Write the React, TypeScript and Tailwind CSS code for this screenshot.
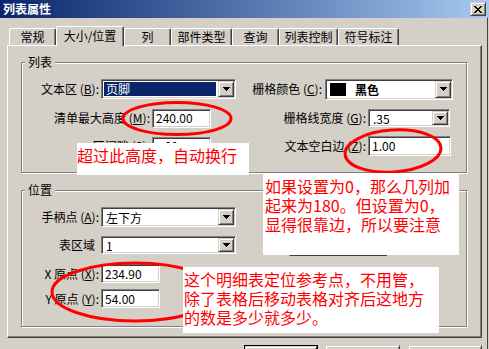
import React from "react";

const sunken =
  "bg-white border border-t-[#808080] border-l-[#808080] border-b-white border-r-white shadow-[inset_1px_1px_0_#404040,inset_-1px_-1px_0_#d4d0c8]";
const raised =
  "bg-[#d4d0c8] border border-t-[#d4d0c8] border-l-[#d4d0c8] border-b-[#404040] border-r-[#404040] shadow-[inset_1px_1px_0_#ffffff,inset_-1px_-1px_0_#808080]";

function Tri() {
  return (
    <svg width="7" height="4" viewBox="0 0 7 4" shapeRendering="crispEdges">
      <path d="M0 0H7V1H6V2H5V3H4V4H3V3H2V2H1V1H0Z" fill="#000" />
    </svg>
  );
}

function DropBtn() {
  return (
    <div className={`${raised} w-[16px] h-full flex items-center justify-center shrink-0`}>
      <Tri />
    </div>
  );
}

function Select({ className, children }: { className: string; children: React.ReactNode }) {
  return (
    <div className={`${sunken} ${className} flex p-[1px] shrink-0`}>
      <div className="flex-1 flex items-center text-[12px] leading-[13px]">{children}</div>
      <DropBtn />
    </div>
  );
}

function Input({ className, value }: { className: string; value: string }) {
  return (
    <div className={`${sunken} ${className} flex items-center pl-[3px] shrink-0 text-[12px] leading-[14px] whitespace-pre`}>
      {value}
    </div>
  );
}

function Label({ className, children }: { className: string; children: React.ReactNode }) {
  return <div className={`${className} text-right shrink-0 whitespace-nowrap text-[12px] leading-[14px]`}>{children}</div>;
}

function Tab({ label, active, className }: { label: string; active?: boolean; className: string }) {
  return (
    <div
      className={`${className} flex items-center justify-center text-[12px] leading-[14px] border-t border-l border-white border-r border-r-[#404040] rounded-tl-[2px] rounded-tr-[2px] shadow-[inset_-1px_0_0_#808080] bg-[#d4d0c8] ${
        active ? "h-[20px] mb-[-1px] relative z-10 pb-[2px]" : "h-[17px]"
      }`}
    >
      {label}
    </div>
  );
}

function Group({ label, className, children }: { label: string; className: string; children: React.ReactNode }) {
  return (
    <div
      className={`${className} relative border border-[#808080] shadow-[inset_1px_1px_0_#ffffff,1px_1px_0_#ffffff] shrink-0`}
    >
      <div className="absolute left-[3px] top-[-8px] px-[3px] bg-[#d4d0c8] text-[12px] leading-[14px]">{label}</div>
      {children}
    </div>
  );
}

export default function App() {
  return (
    <div className="w-[489px] h-[349px] relative overflow-hidden bg-[#d4d0c8] text-black font-['Noto_Sans_CJK_SC',sans-serif]">
      {/* title bar */}
      <div className="h-[18px] flex items-center justify-between bg-linear-to-r from-[#0a246a] to-[#a6caf0]">
        <div className="pl-[3px] text-white font-bold text-[12px] leading-[14px]">列表属性</div>
        <div className={`${raised} w-[16px] h-[14px] mr-[3px] flex items-center justify-center`}>
          <svg width="8" height="7" viewBox="0 0 8 7" shapeRendering="crispEdges">
            <path
              d="M0 0H2V1H3V2H5V1H6V0H8V1H7V2H6V3H5V4H6V5H7V6H8V7H6V6H5V5H3V6H2V7H0V6H1V5H2V4H3V3H2V2H1V1H0Z"
              fill="#000"
            />
          </svg>
        </div>
      </div>

      <div className="flex">
        <div className="w-[487px] pt-[8px] flex flex-col">
          {/* tabs */}
          <div className="flex items-end h-[19px] pl-[9px]">
            <Tab className="w-[47px]" label="常规" />
            <Tab className="w-[68px]" label="大小/位置" active />
            <Tab className="w-[47px]" label="列" />
            <Tab className="w-[61px]" label="部件类型" />
            <Tab className="w-[47px]" label="查询" />
            <Tab className="w-[59px]" label="列表控制" />
            <Tab className="w-[61px]" label="符号标注" />
          </div>

          {/* panel */}
          <div className="ml-[7px] w-[475px] h-[293px] border border-t-white border-l-white border-b-[#404040] border-r-[#404040] shadow-[inset_-1px_-1px_0_#808080] pl-[13px] pt-[16px] flex flex-col">
            <Group label="列表" className="w-[446px] h-[111px] pt-[16px] flex flex-col">
              <div className="flex items-center h-[20px]">
                <Label className="w-[77px]">
                  文本区 (<u>B</u>):
                </Label>
                <Select className="ml-[2px] w-[135px] h-[20px]">
                  <div className="ml-[1px] mr-[2px] h-[14px] leading-[14px] flex-1 bg-[#0a246a] text-white pl-[2px]">页脚</div>
                </Select>
                <Label className="w-[86px]">
                  栅格颜色 (<u>C</u>):
                </Label>
                <Select className="ml-[3px] w-[128px] h-[21px]">
                  <div className="ml-[3px] w-[16px] h-[13px] bg-black" />
                  <div className="ml-[9px] font-bold">黑色</div>
                </Select>
              </div>
              <div className="flex items-center h-[20px] mt-[9px]">
                <Label className="w-[128px]">
                  清单最大高度 (<u>M</u>):
                </Label>
                <Input className="ml-[2px] w-[59px] h-[19px]" value="240.00" />
                <Label className="w-[155px]">
                  栅格线宽度 (<u>G</u>):
                </Label>
                <Select className="ml-[2px] w-[82px] h-[18px]">
                  <div className="pl-[3px]">.35</div>
                </Select>
              </div>
              <div className="flex items-center h-[20px] mt-[8px]">
                <Label className="w-[128px]">
                  区间隙 (<u>S</u>):
                </Label>
                <Input className="ml-[2px] w-[59px] h-[19px]" value="  .00" />
                <Label className="w-[155px]">
                  文本空白边 (<u>Z</u>):
                </Label>
                <Input className="ml-[2px] w-[83px] h-[20px]" value="1.00" />
              </div>
            </Group>

            <Group label="位置" className="mt-[17px] w-[446px] h-[137px] pt-[16px] flex flex-col">
              <div className="flex items-center h-[20px]">
                <Label className="w-[77px]">
                  手柄点 (<u>A</u>):
                </Label>
                <Select className="ml-[2px] w-[135px] h-[20px]">
                  <div className="pl-[3px]">左下方</div>
                </Select>
              </div>
              <div className="flex items-start h-[20px] mt-[9px]">
                <Label className="w-[77px] pr-[4px] pt-[2px]">表区域</Label>
                <Select className="ml-[2px] w-[135px] h-[18px]">
                  <div className="pl-[3px]">1</div>
                </Select>
                <div className={`${raised} ml-[53px] w-[98px] h-[20px]`} />
              </div>
              <div className="flex items-center h-[19px] mt-[8px]">
                <Label className="w-[77px]">
                  X 原点 (<u>X</u>):
                </Label>
                <Input className="ml-[2px] w-[59px] h-[19px]" value="234.90" />
              </div>
              <div className="flex items-center h-[19px] mt-[6px]">
                <Label className="w-[77px]">
                  Y 原点 (<u>Y</u>):
                </Label>
                <Input className="ml-[2px] w-[59px] h-[19px]" value="54.00" />
              </div>
            </Group>
          </div>

          {/* bottom buttons */}
          <div className="mt-[7px] ml-[244px] flex gap-[7px]">
            <div className="w-[74px] h-[23px] border border-black">
              <div className={`${raised} w-full h-full`} />
            </div>
            <div className={`${raised} w-[75px] h-[23px]`} />
            <div className={`${raised} ml-[1px] w-[74px] h-[23px]`} />
          </div>
        </div>
        <div className="w-[1px] h-[331px] bg-[#404040]" />
      </div>

      {/* red ellipses */}
      <svg className="absolute left-0 top-0 pointer-events-none" width="489" height="349" viewBox="0 0 489 349">
        <ellipse cx="177" cy="118.5" rx="54" ry="16" fill="none" stroke="#ff0000" strokeWidth="3" />
        <ellipse cx="393" cy="151" rx="48" ry="21" fill="none" stroke="#ff0000" strokeWidth="3" transform="rotate(-4 393 151)" />
        <ellipse cx="135" cy="292" rx="83" ry="29" fill="none" stroke="#ff0000" strokeWidth="3" />
      </svg>

      {/* callouts */}
      <div className="absolute left-[77px] top-[143px] w-[172px] h-[32px] bg-white text-[#ff0000] text-[16px] leading-[20px] pt-[2px] whitespace-nowrap">
        超过此高度，自动换行
      </div>
      <div className="absolute left-[263px] top-[173px] w-[196px] h-[82px] bg-white text-[#ff0000] text-[16px] leading-[19px] pt-[4px] pl-[2px] whitespace-nowrap">
        如果设置为0，那么几列加
        <br />
        起来为180。但设置为0，
        <br />
        显得很靠边，所以要注意
      </div>
      <div className="absolute left-[183px] top-[267px] w-[256px] h-[66px] bg-white text-[#ff0000] text-[16px] leading-[19px] pt-[3px] pl-[1px] whitespace-nowrap">
        这个明细表定位参考点，不用管，
        <br />
        除了表格后移动表格对齐后这地方
        <br />
        的数是多少就多少。
      </div>
    </div>
  );
}
